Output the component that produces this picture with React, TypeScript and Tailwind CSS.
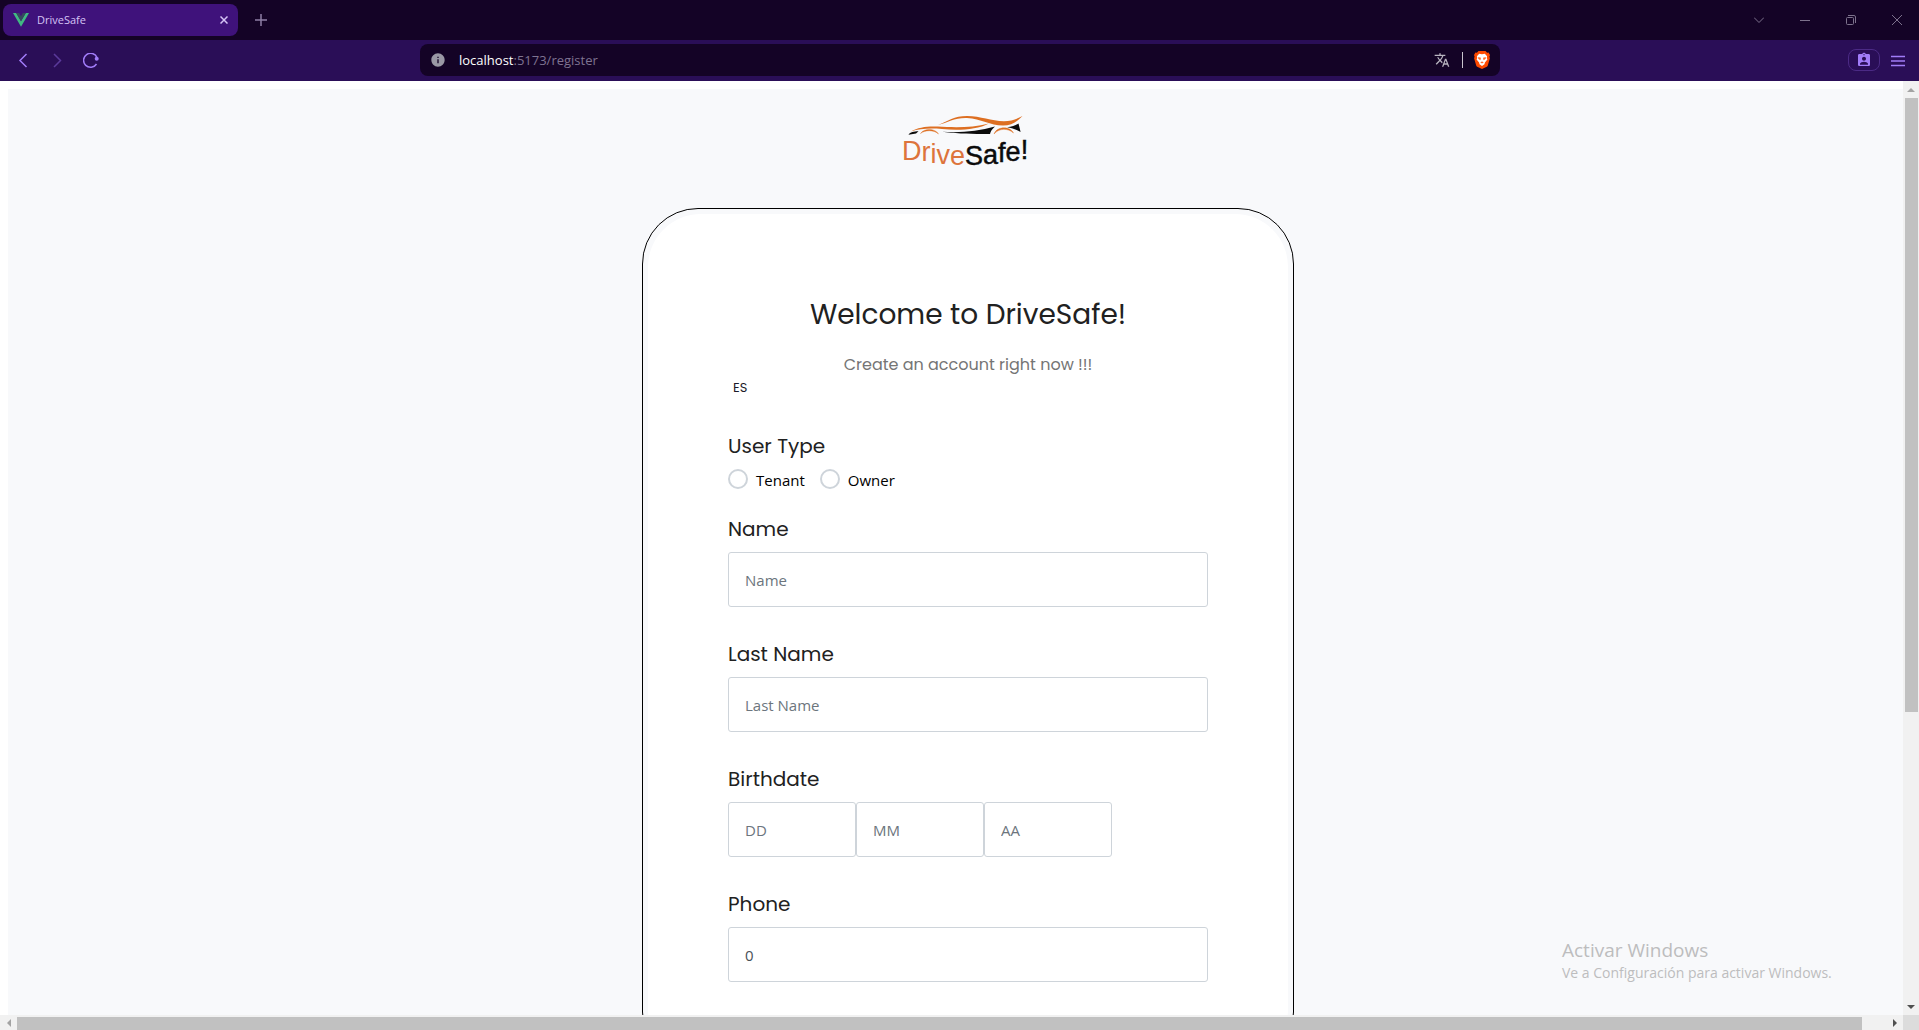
import React, { useState } from "react";
import { MdAssignmentInd, MdInfo, MdTranslate } from "react-icons/md";

function TabStrip() {
  return (
    <div className="flex h-10 items-center bg-[#140326] pl-[3px] text-[#8d7fa5]">
      <div className="flex h-8 w-[235px] items-center rounded-lg bg-[#3f127b] pr-[6px] pl-[10px] text-[#d5c3f5]">
        <svg className="h-4 w-4" viewBox="0 0 16 16" aria-hidden="true">
          <path d="M0 1h3.2L8 9.3 12.8 1H16L8 14.8z" fill="#41b883" />
          <path d="M3.2 1h2.9L8 4.3 9.9 1h2.9L8 9.3z" fill="#35495e" />
        </svg>
        <span className="ml-2 flex-1 text-[11px] leading-4">DriveSafe</span>
        <button type="button" aria-label="Close tab" className="flex h-4 w-4 items-center justify-center">
          <svg className="h-2 w-2" viewBox="0 0 8 8" stroke="currentColor" strokeWidth="1.5">
            <path d="M.5.5l7 7M7.5.5l-7 7" />
          </svg>
        </button>
      </div>
      <button type="button" aria-label="New tab" className="ml-[17px] flex h-3 w-3 items-center justify-center">
        <svg className="h-3 w-3" viewBox="0 0 12 12" stroke="currentColor" strokeWidth="1.5">
          <path d="M6 0v12M0 6h12" />
        </svg>
      </button>
      <div className="-mr-px ml-auto flex text-[#7d728c]">
        <button type="button" aria-label="Search tabs" className="flex h-10 w-[46px] items-center justify-center">
          <svg className="h-[10px] w-[10px]" viewBox="0 0 10 10" fill="none" stroke="currentColor">
            <path d="M0 2.5L5 7.5l5-5" />
          </svg>
        </button>
        <button type="button" aria-label="Minimize" className="flex h-10 w-[46px] items-center justify-center">
          <svg className="h-[10px] w-[10px]" viewBox="0 0 10 10" fill="none" stroke="currentColor">
            <path d="M0 5.5h10" />
          </svg>
        </button>
        <button type="button" aria-label="Restore" className="flex h-10 w-[46px] items-center justify-center">
          <svg className="h-[10px] w-[10px]" viewBox="0 0 10 10" fill="none" stroke="currentColor">
            <rect x=".5" y="2.5" width="7" height="7" rx="1" />
            <path d="M2 .5h6a1.5 1.5 0 0 1 1.5 1.5v6" />
          </svg>
        </button>
        <button type="button" aria-label="Close window" className="flex h-10 w-[46px] items-center justify-center">
          <svg className="h-[10px] w-[10px]" viewBox="0 0 10 10" stroke="currentColor">
            <path d="M0 0l10 10M10 0L0 10" />
          </svg>
        </button>
      </div>
    </div>
  );
}

function BraveIcon() {
  return (
    <svg className="h-[18px] w-4" viewBox="0 0 16 18" aria-hidden="true">
      <path d="M4.500 0h7l1.600 1.700 1.500-.2L16 4l-.6 1.700.5 1.600-2.100 7.200c-.2.600-.5 1-1 1.300L8 18l-4.800-2.200c-.5-.3-.8-.7-1-1.300L.1 7.300l.5-1.600L0 4l1.400-2.500 1.500.2z" fill="#ff4a00" />
      <path d="M5.200 2.700L8 3.300l2.800-.6 2.300 2.500-.3 1.700.6 1.500-2.500 3.200-.4 1.600L8 15l-2.500-1.800-.4-1.600-2.500-3.200.6-1.500-.3-1.700z" fill="#fff" />
      <path d="M4 6.200l2.600.4.300 1.100-.6 1.500-2-1.500zM12 6.200l-2.600.4-.3 1.100.6 1.500 2-1.500zM6.200 11.300L8 10.500l1.800.8L8 12.600z" fill="#ff6a2b" />
    </svg>
  );
}

function Toolbar() {
  return (
    <div className="flex h-[41px] items-center bg-[#2a0e57] text-[#a17cf8]">
      <div className="flex flex-1 items-center pl-[15px]">
        <button type="button" aria-label="Back" className="flex h-4 w-4 items-center justify-center">
          <svg className="h-4 w-4" viewBox="0 0 16 16" fill="none" stroke="currentColor" strokeWidth="1.5">
            <path d="M11.500 1L5 7.500l6.500 6.500" />
          </svg>
        </button>
        <button type="button" aria-label="Forward" className="ml-[18px] flex h-4 w-4 items-center justify-center text-[#5b3a9b]">
          <svg className="h-4 w-4" viewBox="0 0 16 16" fill="none" stroke="currentColor" strokeWidth="1.5">
            <path d="M5 1L11.500 7.500 5 14" />
          </svg>
        </button>
        <button type="button" aria-label="Reload" className="ml-[18px] flex h-4 w-4 items-center justify-center">
          <svg className="h-4 w-4" viewBox="0 0 16 16" fill="none" stroke="currentColor" strokeWidth="1.5">
            <path d="M13.500 11A7 7 0 1 1 14 4.500" />
            <circle cx="13.700" cy="5.800" r="2" fill="currentColor" stroke="none" />
          </svg>
        </button>
      </div>
      <div className="mb-px flex h-8 w-[1080px] min-w-0 items-center rounded-lg bg-[#140326] pr-[10px] pl-[10px]">
        <MdInfo className="h-4 w-4 text-[#9a98a5]" />
        <div className="ml-[13px] flex-1 text-[13px] leading-5 text-[#7f7391]">
          <span className="text-white">localhost</span>:5173/register
        </div>
        <button type="button" aria-label="Translate page">
          <MdTranslate className="h-4 w-4 text-[#b9b5c0]" />
        </button>
        <div className="ml-3 h-4 w-px bg-[#c9c5ce]" />
        <button type="button" aria-label="Brave Shields" className="ml-[11px]">
          <BraveIcon />
        </button>
      </div>
      <div className="flex flex-1 items-center justify-end pr-[14px]">
        <button type="button" aria-label="Profile" className="mb-px flex h-[22px] w-8 items-center justify-center rounded-lg border border-[#4b2a85]">
          <MdAssignmentInd className="h-4 w-4" />
        </button>
        <button type="button" aria-label="Menu" className="ml-[11px]">
          <svg className="h-[14px] w-[14px]" viewBox="0 0 14 14" stroke="currentColor" strokeWidth="1.5">
            <path d="M0 2.500h14M0 7h14M0 11.500h14" />
          </svg>
        </button>
      </div>
    </div>
  );
}

function Logo() {
  return (
    <svg className="h-[84px] w-[170px]" viewBox="3 -3 170 84" role="img" aria-label="DriveSafe!">
      <path d="M58 25C68 21 74 16 87 16C101 16.200 111 21 124 21.300C131 21.300 137 19 142.500 16C137 22 131 25.500 123 25.500C110 25.500 101 18.700 87 18C75 17.500 68 22.500 58 25z" fill="#dd6f22" />
      <path d="M31 31.500C38 27 48 26 58 26.500C73 27.500 92 28 109 23.500C97 29.800 78 30.800 62 29C50 28 40 28.500 31 31.500z" fill="#dd6f22" />
      <path d="M28.500 34.700C30 32 34 31.300 38.500 31.200L36 33.600z" fill="#0b0b0b" />
      <path d="M62 31.800C80 33 98 31.500 115 26.500C112 29 110.500 31.500 110 34C92 34.300 75 33.500 62 31.800z" fill="#0b0b0b" />
      <path d="M127 27.200C132 27 135.500 25.500 138.500 23.500L140.600 32C136 29.200 132 28 127 27.200z" fill="#0b0b0b" />
      <path d="M40.500 33.500C44 28 55 28 58.500 34C54 29.700 45 29.700 40.500 33.500z" fill="#dd6f22" stroke="#dd6f22" strokeWidth=".4" />
      <path d="M114 34C117 26 130 26 133.500 33C128 28 119 28 114 34z" fill="#dd6f22" stroke="#dd6f22" strokeWidth=".4" />
      <text x="22" y="60 61 63 64 65" className="font-['Liberation_Sans'] text-[27px]" fill="#dd743c">
        Drive<tspan y="65 64 62 61 59" fill="#0b0b0b" stroke="#0b0b0b" strokeWidth=".5">Safe!</tspan>
      </text>
    </svg>
  );
}

const labelClass = "block text-[20px] leading-[30px] text-[#212121]";
const inputClass =
  "block h-[55px] rounded-[3px] border border-[#ced4da] bg-white px-4 font-['Open_Sans',sans-serif] text-[15px] text-[#495057] placeholder:text-[#6c757d] outline-none";

function Field({ id, label, value }: { id: string; label: string; value?: string }) {
  return (
    <div>
      <label htmlFor={id} className={labelClass}>{label}</label>
      <input id={id} type="text" placeholder={label} defaultValue={value} className={`${inputClass} mt-2 w-full`} />
    </div>
  );
}

function RegisterForm() {
  const [userType, setUserType] = useState("");
  return (
    <form className="w-[640px] rounded-[53px] bg-white px-20 pt-[81px] pb-20">
      <div className="text-center">
        <h1 className="mb-[18px] text-[28px] leading-10 text-[#212121]">Welcome to DriveSafe!</h1>
        <p className="text-[16px] leading-6 text-[#757575]">Create an account right now !!!</p>
      </div>
      <button type="button" className="block px-[5px] text-[13px] leading-[22px] text-[#1c1b29]">ES</button>
      <fieldset className="mt-8">
        <legend className={labelClass}>User Type</legend>
        <div className="mt-2 flex gap-[15px] font-['Open_Sans',sans-serif] text-[15px] leading-[22px] text-black">
          {["Tenant", "Owner"].map((type) => (
            <label key={type} className="flex items-start gap-2">
              <input
                type="radio"
                name="userType"
                value={type}
                checked={userType === type}
                onChange={() => setUserType(type)}
                className="h-5 w-5 appearance-none rounded-full border-2 border-[#ced4da] bg-white checked:border-[#6366f1] checked:bg-[#6366f1]"
              />
              {type}
            </label>
          ))}
        </div>
      </fieldset>
      <div className="mt-[23px] flex flex-col gap-8">
        <Field id="name" label="Name" />
        <Field id="last-name" label="Last Name" />
        <fieldset>
          <legend className={labelClass}>Birthdate</legend>
          <div className="mt-2 flex">
            {["DD", "MM", "AA"].map((part) => (
              <input key={part} type="text" aria-label={part} placeholder={part} className={`${inputClass} w-32`} />
            ))}
          </div>
        </fieldset>
        <Field id="phone" label="Phone" value="0" />
      </div>
    </form>
  );
}

function Arrow({ d, dim }: { d: string; dim?: boolean }) {
  return (
    <svg className="h-2 w-2 shrink-0" viewBox="0 0 8 8" aria-hidden="true">
      <path d={d} fill={dim ? "#a3a3a3" : "#505050"} />
    </svg>
  );
}

export default function App() {
  return (
    <div className="flex h-screen flex-col overflow-hidden bg-white font-['Open_Sans',sans-serif]">
      <TabStrip />
      <Toolbar />
      <div className="flex min-h-0 flex-1">
        <div className="relative min-w-0 flex-1 overflow-hidden pt-2 pl-2">
          <main className="flex w-screen flex-col items-center bg-[#f8f9fb] pt-2 pb-8 pl-px font-['Poppins',sans-serif]">
            <Logo />
            <div className="mt-[27px] rounded-[56px] border border-black p-[5px]">
              <RegisterForm />
            </div>
          </main>
          <div className="pointer-events-none absolute right-[65px] bottom-[31px] w-[276px] whitespace-nowrap text-[#bdbdbe]">
            <p className="text-[19px] leading-6">Activar Windows</p>
            <p className="text-[14px] leading-[22px]">Ve a Configuración para activar Windows.</p>
          </div>
        </div>
        <div className="flex w-4 flex-col items-center bg-[#f1f1f1]">
          <div className="flex h-[17px] items-center"><Arrow dim d="M0 6L4 2l4 4z" /></div>
          <div className="w-[13px] flex-[614] bg-[#c1c1c1]" />
          <div className="flex-[286]" />
          <div className="flex h-[17px] items-center"><Arrow d="M0 2h8L4 6z" /></div>
        </div>
      </div>
      <div className="flex h-[15px] items-center bg-[#f1f1f1]">
        <div className="flex w-[17px] justify-center"><Arrow dim d="M6 0v8L2 4z" /></div>
        <div className="mt-[2px] h-[13px] flex-[1845] bg-[#c1c1c1]" />
        <div className="flex-[24]" />
        <div className="flex w-[17px] justify-center"><Arrow d="M2 0v8l4-4z" /></div>
        <div className="h-full w-4 bg-[#dcdcdc]" />
      </div>
    </div>
  );
}
